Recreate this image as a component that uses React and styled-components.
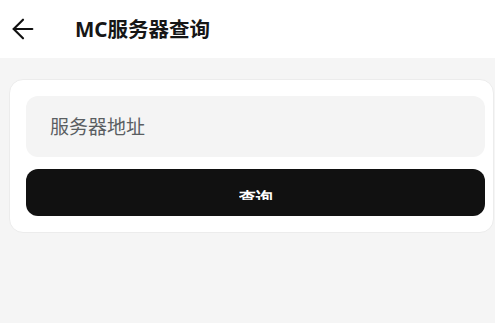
import React from "react";
import styled, { createGlobalStyle } from "styled-components";
import { ArrowLeft } from "lucide-react";

const GlobalStyle = createGlobalStyle`
  html, body {
    margin: 0;
    padding: 0;
    background: #f5f5f5;
    font-family: "Noto Sans", "Noto Sans CJK SC", sans-serif;
  }
  * { box-sizing: border-box; }
`;

const Page = styled.div`
  width: 495px;
  height: 323px;
  background: #f5f5f5;
  overflow: hidden;
`;

const Header = styled.header`
  display: flex;
  align-items: center;
  height: 58px;
  background: #ffffff;
  padding-left: 6px;
`;

const BackButton = styled.button`
  display: flex;
  align-items: center;
  justify-content: center;
  width: 33px;
  height: 33px;
  padding: 0;
  margin-top: 0;
  border: none;
  background: none;
  color: #111;
  cursor: pointer;
`;

const Title = styled.h1`
  margin: 0 0 0 36px;
  font-size: 20.5px;
  font-weight: 700;
  color: #161616;
  line-height: 1;
`;

const Card = styled.section`
  display: flex;
  flex-direction: column;
  gap: 12px;
  margin: 21px 1px 0 9px;
  padding: 16px 8px 16px 16px;
  background: #ffffff;
  border: 1px solid #ececec;
  border-radius: 14px;
`;

const AddressInput = styled.input`
  height: 61px;
  padding: 0 24px;
  border: none;
  border-radius: 12px;
  background: #f4f4f4;
  font-family: inherit;
  font-size: 19px;
  color: #222;
  outline: none;

  &::placeholder {
    color: #5a5e62;
  }
`;

const QueryButton = styled.button`
  display: flex;
  justify-content: center;
  align-items: flex-start;
  height: 47px;
  padding: 21px 0 0;
  border: none;
  border-radius: 12px;
  background: #111111;
  cursor: pointer;
`;

const ButtonLabel = styled.span`
  display: block;
  height: 10px;
  overflow: hidden;
  font-family: inherit;
  font-size: 17px;
  line-height: 17px;
  font-weight: 700;
  color: #ffffff;
`;

export default function App() {
  return (
    <Page>
      <GlobalStyle />
      <Header>
        <BackButton aria-label="返回">
          <ArrowLeft size={32} strokeWidth={1.6} />
        </BackButton>
        <Title>MC服务器查询</Title>
      </Header>
      <Card>
        <AddressInput placeholder="服务器地址" />
        <QueryButton>
          <ButtonLabel>查询</ButtonLabel>
        </QueryButton>
      </Card>
    </Page>
  );
}
